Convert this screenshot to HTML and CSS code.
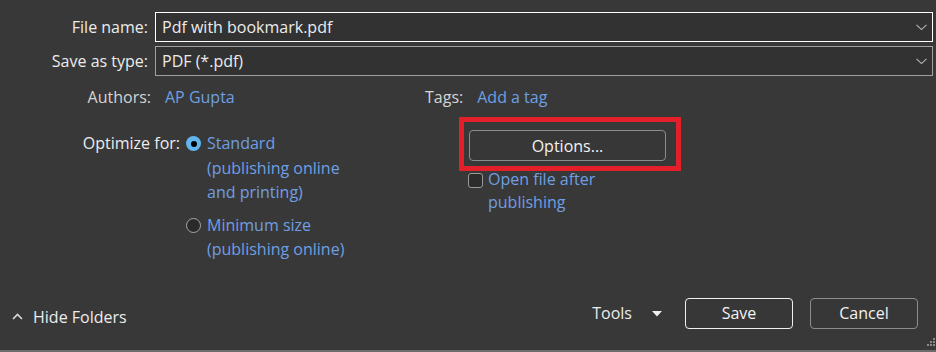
FILE: index.html
```html
<!DOCTYPE html>
<html>
<head>
<meta charset="utf-8">
<link rel="stylesheet" href="styles.css">
</head>
<body>
<div class="dialog">
  <div class="field">
    <div class="field-label">File name:</div>
    <div class="combo combo-focus">
      <span class="combo-text">Pdf with bookmark.pdf</span>
      <svg class="chev" width="11" height="7" viewBox="0 0 11 7"><path d="M0.5 0.8 L5.5 5.6 L10.5 0.8" fill="none" stroke="#b8b8b8" stroke-width="1.1"/></svg>
    </div>
  </div>
  <div class="field field-second">
    <div class="field-label">Save as type:</div>
    <div class="combo">
      <span class="combo-text">PDF (*.pdf)</span>
      <svg class="chev" width="11" height="7" viewBox="0 0 11 7"><path d="M0.5 0.8 L5.5 5.6 L10.5 0.8" fill="none" stroke="#b8b8b8" stroke-width="1.1"/></svg>
    </div>
  </div>

  <div class="meta">
    <div class="meta-label meta-right">Authors:</div>
    <div class="link">AP Gupta</div>
    <div class="meta-label">Tags:</div>
    <div class="link">Add a tag</div>
  </div>

  <div class="optimize">
    <div class="opt-label">Optimize for:</div>
    <div class="radios">
      <div class="radio-row">
        <span class="radio radio-on"><span class="radio-dot"></span></span>
        <span class="link">Standard<br>(publishing online<br>and printing)</span>
      </div>
      <div class="radio-row radio-row-2">
        <span class="radio"></span>
        <span class="link">Minimum size<br>(publishing online)</span>
      </div>
    </div>
    <div class="side">
      <div class="highlight">
        <button class="btn btn-options">Options...</button>
      </div>
      <div class="check-row">
        <span class="checkbox"></span>
        <span class="link">Open file after<br>publishing</span>
      </div>
    </div>
  </div>

  <div class="footer">
    <div class="hide-folders">
      <svg width="11" height="7" viewBox="0 0 11 7"><path d="M1 6 L5.5 1.5 L10 6" fill="none" stroke="#d8d8d8" stroke-width="1.6"/></svg>
      <span>Hide Folders</span>
    </div>
    <div class="tools">
      <span>Tools</span>
      <svg width="10" height="6" viewBox="0 0 10 6"><path d="M0 0 H10 L5 5.5 Z" fill="#f0f0f0"/></svg>
    </div>
    <button class="btn btn-save">Save</button>
    <button class="btn btn-cancel">Cancel</button>
  </div>

  <svg class="grip" width="10" height="10" viewBox="0 0 10 10">
    <rect x="8" y="0" width="2" height="2" fill="#8a8a8a"/>
    <rect x="5" y="3" width="2" height="2" fill="#8a8a8a"/>
    <rect x="8" y="3" width="2" height="2" fill="#8a8a8a"/>
    <rect x="2" y="6" width="2" height="2" fill="#8a8a8a"/>
    <rect x="5" y="6" width="2" height="2" fill="#8a8a8a"/>
    <rect x="8" y="6" width="2" height="2" fill="#8a8a8a"/>
  </svg>
</div>
</body>
</html>
```

FILE: styles.css
```css
html, body {
  margin: 0;
  padding: 0;
  background: #383838;
}

body {
  width: 936px;
  height: 352px;
  overflow: hidden;
  font-family: "Open Sans", "Noto Sans", sans-serif;
  font-size: 16px;
  color: #ececec;
}

.dialog {
  position: relative;
  width: 936px;
  height: 352px;
  box-sizing: border-box;
  padding-top: 12px;
  border-bottom: 2px solid #6c6c6c;
  display: flex;
  flex-direction: column;
}

.field {
  display: flex;
  align-items: center;
  height: 30px;
}

.field-second {
  margin-top: 4px;
}

.field-label {
  width: 155px;
  box-sizing: border-box;
  padding-right: 7px;
  text-align: right;
  white-space: nowrap;
}

.combo {
  width: 778px;
  height: 30px;
  box-sizing: border-box;
  border: 1px solid #a0a0a0;
  background: #323232;
  display: flex;
  align-items: center;
  padding: 0 5px 0 6px;
}

.combo-focus {
  border-color: #ffffff;
}

.combo-text {
  flex: 1;
  white-space: nowrap;
}

.chev {
  display: block;
}

.meta {
  margin-top: 9px;
  height: 24px;
  display: grid;
  grid-template-columns: 151px 246px auto auto;
  column-gap: 14px;
  align-items: center;
  justify-content: start;
}

.meta-label {
  color: #d4d4d4;
}

.meta-right {
  text-align: right;
}

.link {
  color: #6f9fe2;
}

.optimize {
  margin-top: 22px;
  display: flex;
  align-items: flex-start;
  line-height: 24.5px;
}

.opt-label {
  width: 180px;
  text-align: right;
  white-space: nowrap;
}

.radios {
  width: 279px;
  padding-left: 6px;
  box-sizing: border-box;
}

.radio-row {
  display: flex;
  align-items: flex-start;
  gap: 6px;
}

.radio-row-2 {
  margin-top: 8px;
}

.radio {
  width: 15px;
  height: 15px;
  box-sizing: border-box;
  border-radius: 50%;
  border: 1px solid #a8a8a8;
  background: #2a2a2a;
  margin-top: 5px;
  flex: none;
  display: flex;
  align-items: center;
  justify-content: center;
}

.radio-on {
  border: none;
  background: #62b6ee;
}

.radio-dot {
  width: 6px;
  height: 6px;
  border-radius: 50%;
  background: #000;
}

.side {
  display: flex;
  flex-direction: column;
}

.highlight {
  margin-top: -14px;
  width: 222px;
  height: 54px;
  box-sizing: border-box;
  border: 5px solid #e3202a;
  padding: 8px 0 0 5px;
}

.btn {
  font-family: inherit;
  font-size: 16px;
  color: #f2f2f2;
  background: #373737;
  border: 1px solid #8c8c8c;
  border-radius: 4px;
  box-sizing: border-box;
  padding: 0;
  margin: 0;
  line-height: 1;
}

.btn-options {
  width: 197px;
  height: 31px;
  display: block;
}

.check-row {
  margin-top: -3px;
  margin-left: 9px;
  display: flex;
  align-items: flex-start;
  gap: 5px;
  line-height: 23px;
}

.checkbox {
  width: 15px;
  height: 15px;
  box-sizing: border-box;
  border: 1px solid #9a9a9a;
  border-radius: 3px;
  background: #2c2c2c;
  margin-top: 5px;
  flex: none;
}

.footer {
  margin-top: auto;
  margin-bottom: 22px;
  display: flex;
  align-items: center;
  height: 30px;
}

.hide-folders {
  display: flex;
  align-items: center;
  gap: 10px;
  padding-left: 12px;
  margin-top: 7px;
}

.hide-folders svg {
  display: block;
}

.tools {
  margin-left: auto;
  display: flex;
  align-items: center;
  gap: 20px;
}

.tools svg {
  display: block;
  margin-top: 2px;
}

.btn-save {
  margin-left: 23px;
  width: 108px;
  height: 31px;
  border-color: #f0f0f0;
}

.btn-cancel {
  margin-left: 17px;
  margin-right: 18px;
  width: 108px;
  height: 31px;
}

.grip {
  position: absolute;
  right: 1px;
  bottom: 2px;
}
```
